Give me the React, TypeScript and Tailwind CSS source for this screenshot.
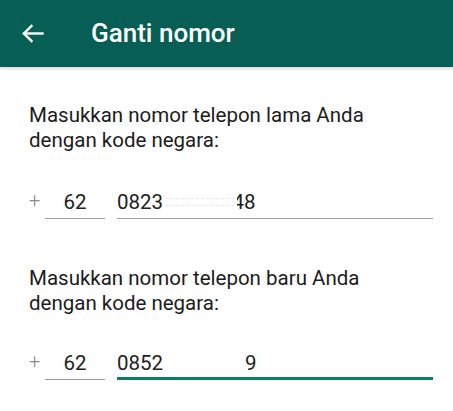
import React from 'react';

const BackArrow = () => (
    <svg width="23" height="19" viewBox="0 0 23 19" fill="none" stroke="white" strokeWidth="2.4" strokeLinecap="square">
        <path d="M3 9.5H21.5" />
        <path d="M10.5 2L3 9.5L10.5 17" />
    </svg>
);

const Masked = () => (
    <span className="inline-flex flex-col justify-center gap-[6px] w-[74px] h-[20px] align-middle px-[3px]">
        <span className="block border-t border-dashed border-gray-200" />
        <span className="block border-t border-dashed border-gray-200" />
    </span>
);

const NumberRow = ({ active, children }: { active?: boolean; children: React.ReactNode }) => (
    <div className="flex items-end">
        <span className="w-[16px] shrink-0 pb-[7px] text-[20px] leading-[24px] text-[#8a8a8a] font-light">+</span>
        <div className="w-[60px] shrink-0 border-b border-[#9e9e9e] pb-[4px] text-center text-[20.5px] leading-[24px] text-[#212121]">
            62
        </div>
        <div
            className={
                active
                    ? "ml-[12px] w-[316px] shrink-0 border-b-[3px] border-[#0a8063] pb-[2px] text-[20.5px] leading-[24px] text-[#212121] flex items-center"
                    : "ml-[12px] w-[316px] shrink-0 border-b border-[#9e9e9e] pb-[4px] text-[20.5px] leading-[24px] text-[#212121] flex items-center"
            }
        >
            {children}
        </div>
    </div>
);

export default function App() {
    return (
        <div className="w-[453px] h-[411px] bg-white overflow-hidden font-['Roboto',sans-serif]">
            {/* Toolbar */}
            <header className="h-[67px] bg-[#075e54] flex items-center shadow-[0_2px_3px_rgba(0,0,0,0.15)]">
                <span className="ml-[21px] flex items-center">
                    <BackArrow />
                </span>
                <h1 className="ml-[47px] text-white text-[26px] font-medium">Ganti nomor</h1>
            </header>

            <main className="pl-[29px]">
                <p className="mt-[36px] text-[20.5px] leading-[25px] text-[#1c1c1c]">
                    Masukkan nomor telepon lama Anda
                    <br />
                    dengan kode negara:
                </p>

                <div className="mt-[35px]">
                    <NumberRow>
                        <span>0823</span>
                        <Masked />
                        <span className="inline-block w-[7px] overflow-hidden text-right" dir="rtl">4</span>
                        <span>8</span>
                    </NumberRow>
                </div>

                <p className="mt-[47px] text-[20.5px] leading-[25px] text-[#1c1c1c]">
                    Masukkan nomor telepon baru Anda
                    <br />
                    dengan kode negara:
                </p>

                <div className="mt-[33px]">
                    <NumberRow active>
                        <span>0852</span>
                        <span className="ml-[82px]">9</span>
                    </NumberRow>
                </div>
            </main>
        </div>
    );
}
